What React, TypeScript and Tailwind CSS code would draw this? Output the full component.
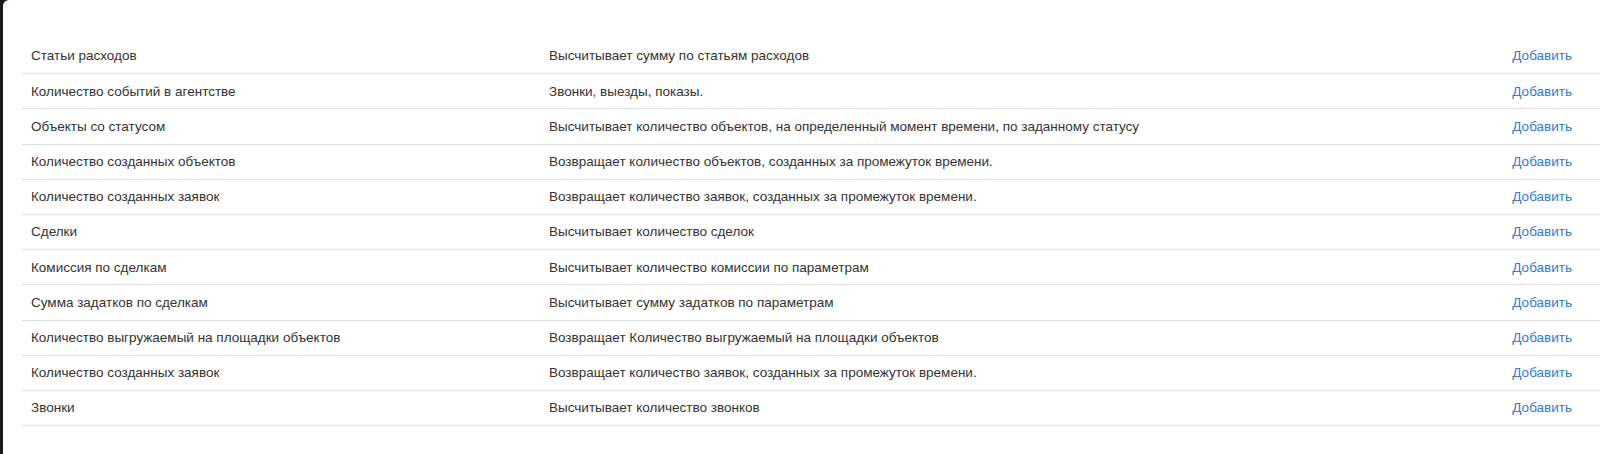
import React from "react";

const rows: [string, string][] = [
  ["Статьи расходов", "Высчитывает сумму по статьям расходов"],
  ["Количество событий в агентстве", "Звонки, выезды, показы."],
  ["Объекты со статусом", "Высчитывает количество объектов, на определенный момент времени, по заданному статусу"],
  ["Количество созданных объектов", "Возвращает количество объектов, созданных за промежуток времени."],
  ["Количество созданных заявок", "Возвращает количество заявок, созданных за промежуток времени."],
  ["Сделки", "Высчитывает количество сделок"],
  ["Комиссия по сделкам", "Высчитывает количество комиссии по параметрам"],
  ["Сумма задатков по сделкам", "Высчитывает сумму задатков по параметрам"],
  ["Количество выгружаемый на площадки объектов", "Возвращает Количество выгружаемый на площадки объектов"],
  ["Количество созданных заявок", "Возвращает количество заявок, созданных за промежуток времени."],
  ["Звонки", "Высчитывает количество звонков"],
];

export default function App() {
  return (
    <div className="h-[454px] w-[1600px] overflow-hidden bg-gradient-to-r from-[#1a1a1a] to-[#4a4a4a] flex">
      <div
        className="ml-[3px] flex-1 h-full bg-white rounded-tl-[6px] pl-[19px] pt-[39px] text-[13.5px] text-[#333333]"
        style={{ fontFamily: '"Liberation Sans", Arial, sans-serif' }}
      >
        <div className="flex flex-col">
          {rows.map(([name, desc], i) => (
            <div
              key={i}
              className="flex items-center h-[35.2px] border-b border-[#dddddd]"
            >
              <div className="w-[519px] pl-[9px] pt-[1px] whitespace-nowrap">{name}</div>
              <div className="flex-1 pl-[8px] pt-[1px] whitespace-nowrap">{desc}</div>
              <div className="pr-[28px] pt-[1px] text-right">
                <a href="#" className="text-[#2f7dcc]">
                  Добавить
                </a>
              </div>
            </div>
          ))}
        </div>
      </div>
    </div>
  );
}
